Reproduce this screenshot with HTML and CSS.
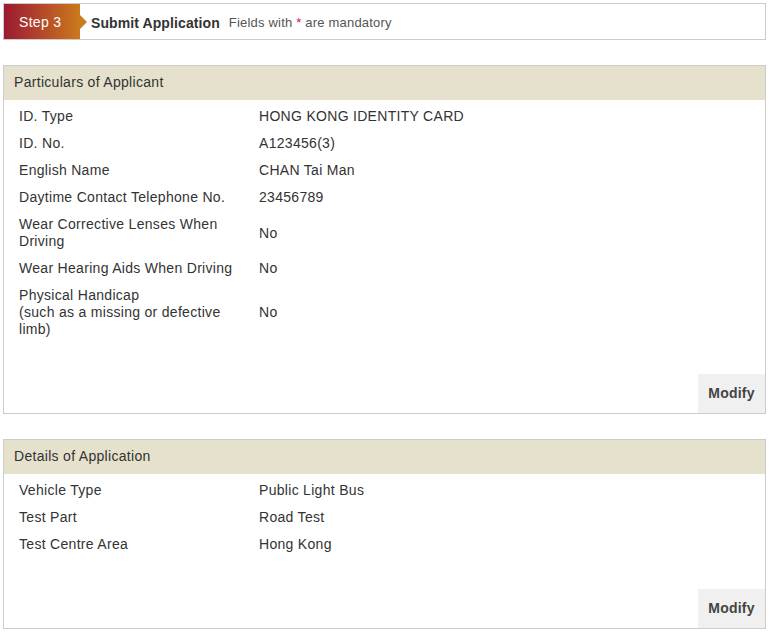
FILE: index.html
```html
<!DOCTYPE html>
<html>
<head>
<meta charset="utf-8">
<link rel="stylesheet" href="styles.css">
</head>
<body>
<div class="page">
  <div class="stepbar">
    <div class="step">Step 3</div>
    <div class="step-title">Submit Application</div>
    <div class="step-note">Fields with <span class="req">*</span> are mandatory</div>
  </div>

  <div class="panel">
    <div class="panel-head">Particulars of Applicant</div>
    <table class="info">
      <tr><td class="lbl">ID. Type</td><td class="val">HONG KONG IDENTITY CARD</td></tr>
      <tr><td class="lbl">ID. No.</td><td class="val">A123456(3)</td></tr>
      <tr><td class="lbl">English Name</td><td class="val">CHAN Tai Man</td></tr>
      <tr><td class="lbl">Daytime Contact Telephone No.</td><td class="val">23456789</td></tr>
      <tr><td class="lbl">Wear Corrective Lenses When Driving</td><td class="val">No</td></tr>
      <tr><td class="lbl">Wear Hearing Aids When Driving</td><td class="val">No</td></tr>
      <tr><td class="lbl">Physical Handicap<br>(such as a missing or defective limb)</td><td class="val">No</td></tr>
    </table>
    <div class="actions"><button class="modify">Modify</button></div>
  </div>

  <div class="panel">
    <div class="panel-head">Details of Application</div>
    <table class="info">
      <tr><td class="lbl">Vehicle Type</td><td class="val">Public Light Bus</td></tr>
      <tr><td class="lbl">Test Part</td><td class="val">Road Test</td></tr>
      <tr><td class="lbl">Test Centre Area</td><td class="val">Hong Kong</td></tr>
    </table>
    <div class="actions"><button class="modify">Modify</button></div>
  </div>
</div>
</body>
</html>
```

FILE: styles.css
```css
* { box-sizing: border-box; }
html, body { margin: 0; padding: 0; background: #fff; }
body {
  font-family: "Liberation Sans", Arial, sans-serif;
  font-size: 14px;
  letter-spacing: 0.3px;
  color: #333;
}
.page {
  width: 763px;
  margin: 3px 0 0 3px;
}
.stepbar {
  display: flex;
  align-items: center;
  height: 37px;
  border: 1px solid #cccccc;
  background: #fff;
}
.step {
  position: relative;
  width: 76px;
  height: 35px;
  line-height: 37px;
  padding-left: 15px;
  color: #fff;
  font-size: 14px;
  background: linear-gradient(to right, #9a1b30 0%, #b2432a 45%, #cb7a1c 100%);
}
.step::after {
  content: "";
  position: absolute;
  right: -7px;
  top: 50%;
  margin-top: -7px;
  border-top: 7px solid transparent;
  border-bottom: 7px solid transparent;
  border-left: 7px solid #cb7a1c;
}
.step-title {
  margin-left: 11px;
  padding-top: 2px;
  font-weight: bold;
  font-size: 14px;
  letter-spacing: 0.1px;
  color: #333;
}
.step-note {
  margin-left: 9px;
  padding-top: 2px;
  font-size: 13px;
  letter-spacing: 0.2px;
  color: #555;
}
.req { color: #d3172a; }

.panel {
  margin-top: 25px;
  border: 1px solid #cccccc;
  background: #fff;
}
.panel-head {
  height: 34px;
  line-height: 33px;
  padding-left: 10px;
  background: #e6e1cc;
  font-size: 14px;
  color: #333;
}
.info {
  border-collapse: collapse;
  margin: 3px 0 31px 10px;
}
.info td {
  padding: 5px 5px;
  line-height: 17px;
  vertical-align: middle;
  font-size: 14px;
}
.info td.lbl { width: 240px; }
.actions {
  display: flex;
  justify-content: flex-end;
}
.modify {
  height: 39px;
  width: 67px;
  border: 0;
  background: #f0f0f0;
  font-family: "Liberation Sans", Arial, sans-serif;
  font-size: 14px;
  font-weight: bold;
  letter-spacing: 0.2px;
  color: #444;
  padding: 0 0 2px;
  cursor: pointer;
}
```
